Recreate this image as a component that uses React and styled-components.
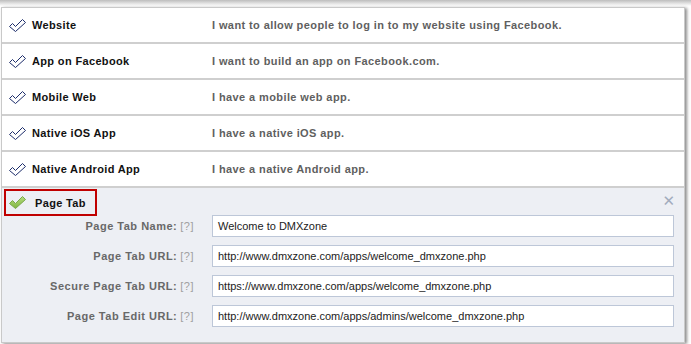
import React from 'react'
import styled, { createGlobalStyle } from 'styled-components'

const Global = createGlobalStyle`
  html, body {
    margin: 0;
    padding: 0;
    background: #ffffff;
  }
  body {
    font-family: "Liberation Sans", Arial, sans-serif;
    font-size: 11px;
  }
`

const Frame = styled.div`
  width: 691px;
  height: 344px;
  overflow: hidden;
  background: linear-gradient(#bdbdbd, #ffffff 6px);
  padding: 7px 6px 0 1px;
  box-sizing: border-box;
`

const Panel = styled.div`
  border: 1px solid #c9c9c9;
  background: #ffffff;
  box-shadow: 2px 1px 3px rgba(0, 0, 0, 0.45);
`

const Row = styled.div`
  display: grid;
  grid-template-columns: 30px 180px 1fr;
  align-items: center;
  height: 34px;
  border-bottom: 2px solid #cfcfcf;
`

const IconCell = styled.div`
  display: flex;
  align-items: center;
  padding-left: 6px;
`

const Title = styled.div`
  font-weight: bold;
  color: #111;
  font-size: 11px;
  letter-spacing: 0.35px;
`

const Desc = styled.div`
  font-weight: bold;
  color: #5f5f5f;
  font-size: 11px;
  letter-spacing: 0.4px;
`

const Section = styled.div`
  position: relative;
  background: #edeff4;
  padding: 0 10px 15px 1px;
`

const Selected = styled.div`
  display: inline-grid;
  grid-template-columns: 27px auto;
  align-items: center;
  height: 23px;
  width: 87px;
  border: 2px solid #c00000;
  margin: 1px 0 0 1px;
  padding-left: 2px;
  box-sizing: content-box;
`

const Close = styled.span`
  position: absolute;
  top: 6px;
  right: 9px;
  color: #a3acbd;
  font-size: 15px;
  font-weight: bold;
  font-family: "DejaVu Sans", sans-serif;
  line-height: 1;
`

const Form = styled.div`
  display: flex;
  flex-direction: column;
  gap: 8px;
  margin-top: -1px;
`

const Field = styled.div`
  display: grid;
  grid-template-columns: 191px 1fr;
  column-gap: 18px;
  align-items: center;
`

const Label = styled.div`
  text-align: right;
  font-weight: bold;
  color: #686868;
  white-space: nowrap;
  letter-spacing: 0.5px;
`

const Help = styled.span`
  font-weight: normal;
  color: #a0a0a0;
  margin-left: 3px;
  letter-spacing: 0.5px;
`

const Input = styled.div`
  height: 20px;
  border: 1px solid #bdc7d8;
  background: #fff;
  display: flex;
  align-items: center;
  padding-left: 5px;
  font-family: "Liberation Sans", Arial, sans-serif;
  font-size: 11px;
  color: #222;
`

const Check = ({ green }) => (
  <svg width="19" height="15" viewBox="0 0 19 15">
    {green && (
      <defs>
        <linearGradient id="g" x1="0" y1="0" x2="0" y2="1">
          <stop offset="0" stopColor="#b5dc7f" />
          <stop offset="1" stopColor="#7fb43f" />
        </linearGradient>
      </defs>
    )}
    <polygon
      points="1.5,8.5 4.5,5.5 7.5,8.5 14.5,1.5 17.5,4.5 7.5,13.5"
      fill={green ? 'url(#g)' : '#fff'}
      stroke={green ? '#7aa84a' : '#1d2d6b'}
      strokeWidth="1"
      strokeLinejoin="miter"
    />
  </svg>
)

const rows = [
  ['Website', 'I want to allow people to log in to my website using Facebook.'],
  ['App on Facebook', 'I want to build an app on Facebook.com.'],
  ['Mobile Web', 'I have a mobile web app.'],
  ['Native iOS App', 'I have a native iOS app.'],
  ['Native Android App', 'I have a native Android app.'],
]

const fields = [
  ['Page Tab Name:', 'Welcome to DMXzone'],
  ['Page Tab URL:', 'http://www.dmxzone.com/apps/welcome_dmxzone.php'],
  ['Secure Page Tab URL:', 'https://www.dmxzone.com/apps/welcome_dmxzone.php'],
  ['Page Tab Edit URL:', 'http://www.dmxzone.com/apps/admins/welcome_dmxzone.php'],
]

const App = () => {
  return (
    <Frame>
      <Global />
      <Panel>
        {rows.map(([t, d]) => (
          <Row key={t}>
            <IconCell><Check /></IconCell>
            <Title>{t}</Title>
            <Desc>{d}</Desc>
          </Row>
        ))}
        <Section>
          <Selected>
            <Check green />
            <Title>Page Tab</Title>
          </Selected>
          <Close>✕</Close>
          <Form>
            {fields.map(([l, v]) => (
              <Field key={l}>
                <Label>{l}<Help>[?]</Help></Label>
                <Input>{v}</Input>
              </Field>
            ))}
          </Form>
        </Section>
      </Panel>
    </Frame>
  )
}

export default App
